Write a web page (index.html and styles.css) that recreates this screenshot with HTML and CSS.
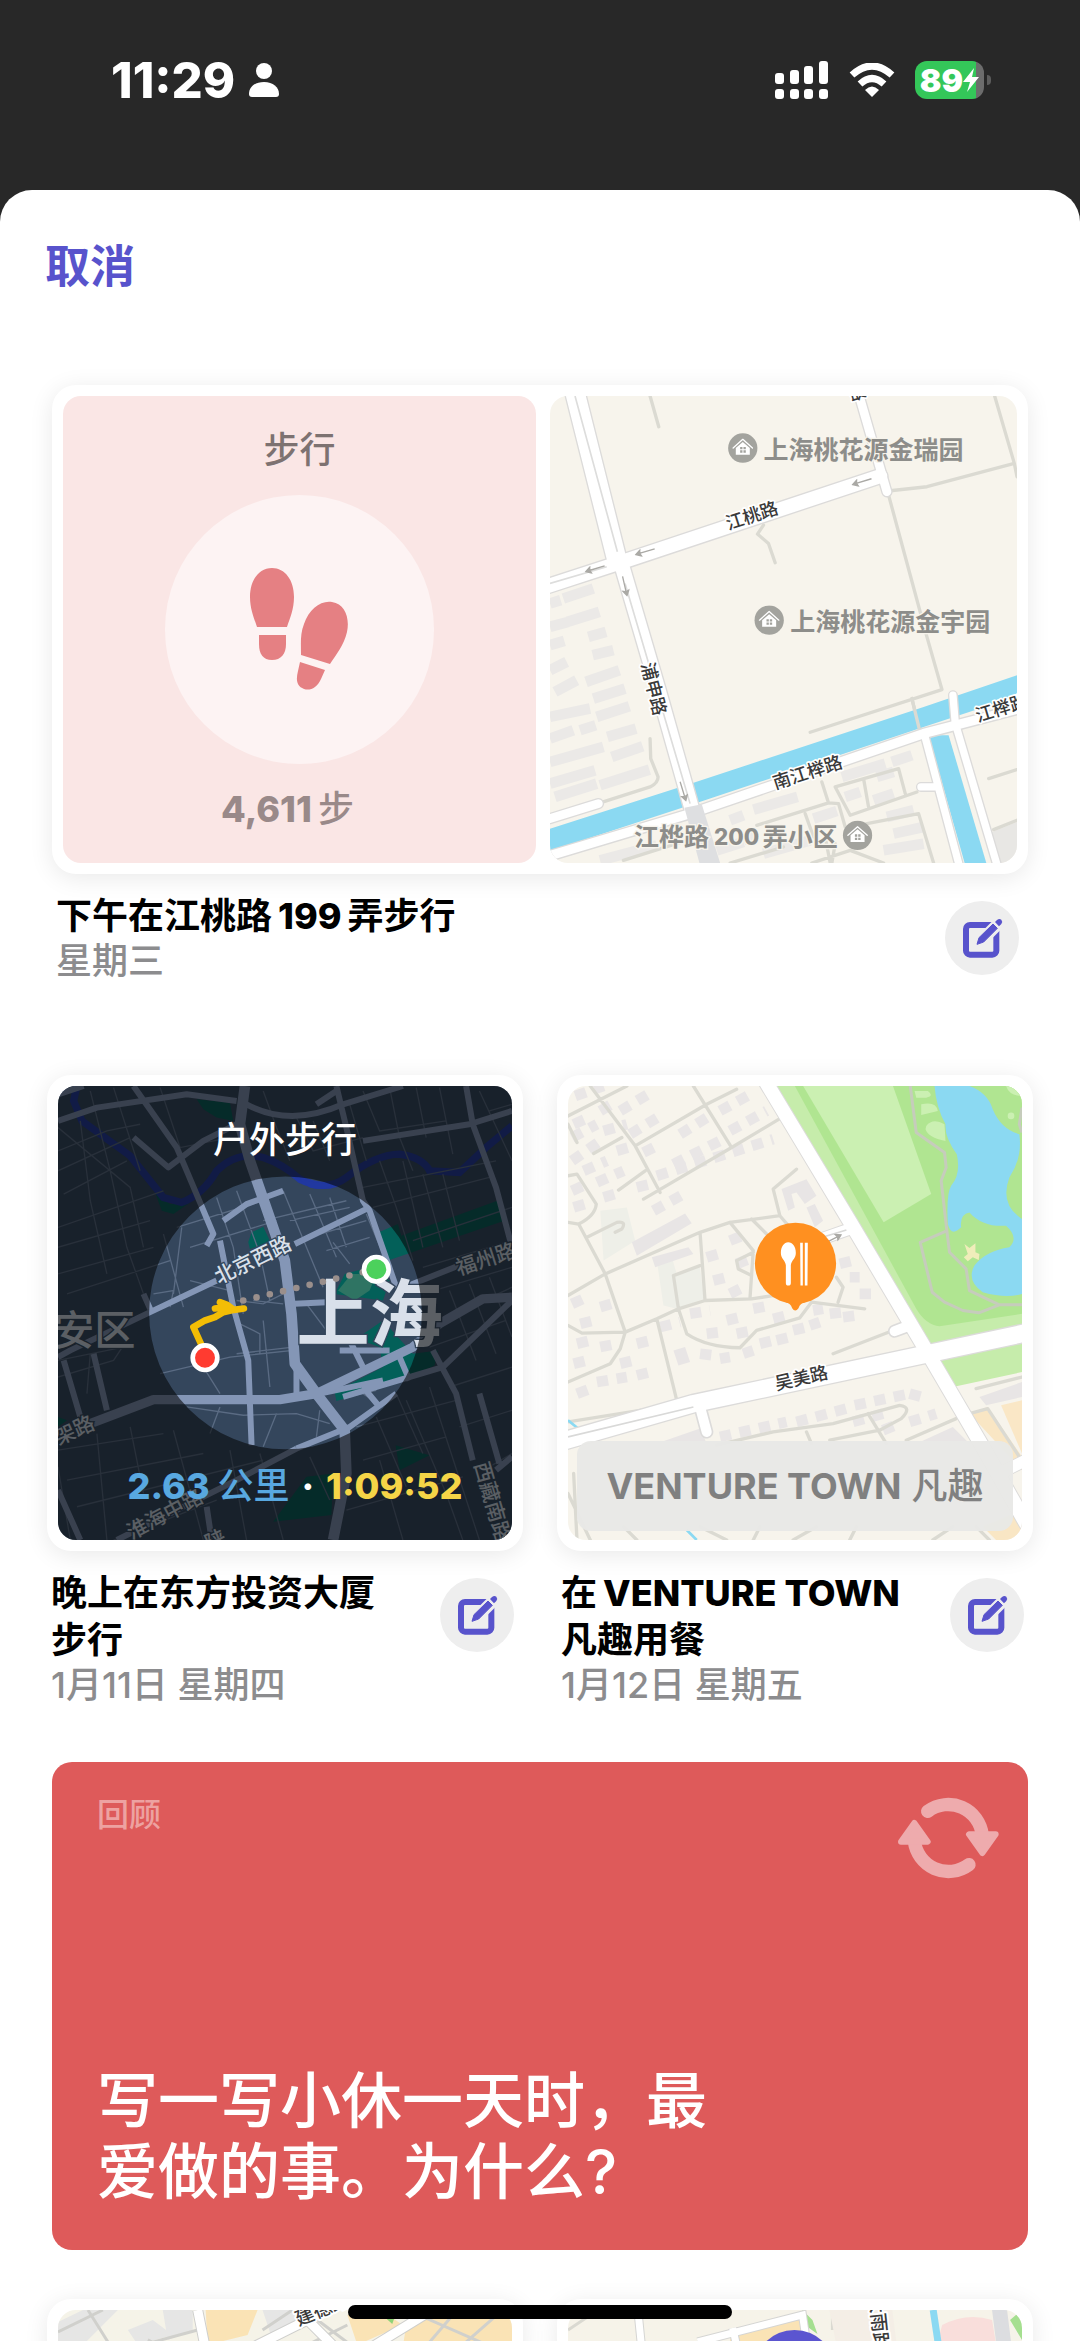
FILE: index.html
```html
<!DOCTYPE html>
<html lang="zh-CN">
<head>
    <meta charset="UTF-8">
    <meta name="viewport" content="width=device-width, initial-scale=1.0">
    <title>手记建议</title>
    <link rel="stylesheet" href="styles.css">
</head>
<body>
    <!-- Shared icons -->
    <svg class="icon-defs" aria-hidden="true">
        <symbol id="icon-edit" viewBox="128 108 126 126">
            <rect x="143" y="132" width="91" height="89" rx="12" fill="none" stroke="currentColor" stroke-width="18"/>
            <path d="M182 186L256 112" stroke="#eeeeee" stroke-width="36" fill="none"/>
            <path d="M176 190L182 170L224 129L237 142L196 183Z" fill="currentColor" stroke="currentColor" stroke-width="3" stroke-linejoin="round"/>
            <path d="M230 123L236 117Q243 111 249 116Q254 122 249 129L242 136Z" fill="currentColor"/>
        </symbol>
        <symbol id="icon-house" viewBox="0 0 90 90">
            <circle cx="45" cy="45" r="44" fill="#a3a39e"/>
            <path d="M16 45L45 19L74 45" fill="none" stroke="#fff" stroke-width="4" stroke-linecap="round" stroke-linejoin="round"/>
            <path d="M24 45L45 27L66 45V65H24Z" fill="#fff"/>
            <path d="M37 42h7v7h-7zM47 42h7v7h-7zM37 52h7v7h-7zM47 52h7v7h-7z" fill="#a3a39e"/>
        </symbol>
        <symbol id="icon-arrow" viewBox="0 0 64 24">
            <path d="M62 12H14M18 3L3 12L18 21L15 12Z" fill="#aaa9a5" stroke="#aaa9a5" stroke-width="4"/>
        </symbol>
    </svg>

    <header class="status-bar">
        <div class="status-left">
            <span class="time">11:29</span>
            <svg class="person" viewBox="0 0 32 34" aria-hidden="true">
                <circle cx="16" cy="8" r="8" fill="#fff"/>
                <path d="M1 31C1 24 7 19 16 19S31 24 31 31Q31 34 28 34H4Q1 34 1 31Z" fill="#fff"/>
            </svg>
        </div>
        <div class="status-right">
            <svg class="signal" viewBox="0 0 54 38" aria-hidden="true" fill="#fff">
                <rect x="0" y="12" width="9" height="11" rx="3"/>
                <rect x="15" y="9" width="9" height="14" rx="3"/>
                <rect x="29" y="5" width="9" height="18" rx="3"/>
                <rect x="44" y="0" width="9" height="23" rx="3"/>
                <rect x="0" y="28" width="9" height="10" rx="3"/>
                <rect x="15" y="28" width="9" height="10" rx="3"/>
                <rect x="29" y="28" width="9" height="10" rx="3"/>
                <rect x="44" y="28" width="9" height="10" rx="3"/>
            </svg>
            <svg class="wifi" viewBox="0 0 46 34" aria-hidden="true">
                <path d="M3 12Q23 -6 43 12M11 21Q23 10 35 21" fill="none" stroke="#fff" stroke-width="7"/>
                <path d="M23 34L16 27Q23 20 30 27Z" fill="#fff"/>
            </svg>
            <div class="battery">
                <span class="battery-level">89</span>
                <svg class="bolt" viewBox="0 0 16 24" aria-hidden="true">
                    <path d="M11 0L0 14H7L4 24L16 9H9Z" fill="#fff"/>
                </svg>
            </div>
        </div>
    </header>

    <main class="sheet">
        <button class="cancel" type="button">取消</button>

        <article class="moment moment-wide">
            <div class="card card-split">
                <div class="steps">
                    <p class="steps-title">步行</p>
                    <div class="steps-circle">
                        <svg viewBox="0 0 98 122" aria-hidden="true" fill="#e58083">
                            <path d="M22 0C35 0 44 12 44 29C44 41 40 50 37 59H7C4 50 0 41 0 29C0 12 9 0 22 0Z"/>
                            <path d="M9 67H36V76C36 86 31 92 22 92S9 86 9 76Z"/>
                            <path d="M82 34C95 36 100 50 97 64C94 77 86 87 80 96L51 87C51 76 50 66 54 56C59 41 71 32 82 34Z"/>
                            <path d="M50 94L75 102L71 111C67 120 60 123 54 121C46 118 46 111 48 103Z"/>
                        </svg>
                    </div>
                    <p class="steps-count"><span class="latin">4,611</span>步</p>
                </div>
                <div class="tile">
                    <svg class="map" viewBox="60 78 1400 1400" role="img" aria-label="江桃路地图">
                        <rect x="60" y="78" width="1400" height="1400" fill="#f7f4ec"/>
                        <!-- buildings -->
                        <path class="building" d="M100 685L190 655M112 755L208 725M175 800L228 785M188 855L250 840M168 935L268 900M190 985L285 955M200 1040L298 1008M232 1100L318 1075M245 1160L338 1128M150 1080L197 1065M210 1245L358 1198M60 700L92 690M60 770L115 755M60 825L103 812M60 900L110 875M75 965L140 930M60 1040L180 1015M60 1105L130 1080M60 1175L220 1130M60 1240L195 1200M75 1280L200 1240"/>
                        <path class="building" d="M670 1318L802 1280M935 1220L1065 1180M1085 1175L1145 1155M210 1470L380 1425M600 1350L640 1335M640 1410L680 1395M945 1280L990 1265M1040 1220L1090 1205M1030 1290L1090 1270M1070 1340L1150 1320M1090 1390L1180 1370M1060 1440L1180 1420M560 1440L640 1415M700 1450L840 1410M850 1345L920 1322"/>
                        <path d="M1385 1385L1460 1355V1478H1410Z" fill="#e8e7e4"/>
                        <!-- footpaths -->
                        <g class="path">
                            <path d="M360 78L386 170M1393 78L1452 280L1460 320M1080 362L1190 350L1452 280M700 465L682 492L715 520L735 578M1075 375L1125 560L1190 800L1235 958L840 1086M1145 985L1168 1080"/>
                            <path d="M360 1105L362 1165L384 1220Q384 1238 360 1250L210 1298M875 1235L895 1298L680 1365M915 1250L1105 1195L1125 1270M915 1250L960 1335L1160 1265M1000 1225L1015 1310M895 1298L925 1300L945 1370M960 1370L1165 1330L1210 1478M845 1478L960 1440L1060 1478M825 1330L850 1400M885 1400L900 1478M280 1470L470 1410M600 1478L760 1430M1375 1225L1460 1198M1390 1378L1460 1350M915 1420L905 1478"/>
                        </g>
                        <!-- canal -->
                        <path d="M60 1375L495 1236L1180 1010L1460 915V978L1180 1070L495 1300L60 1442Z" fill="#8bd9f2"/>
                        <path d="M1195 1095H1255L1368 1478H1303Z" fill="#8bd9f2"/>
                        <path class="path" d="M1145 985L1168 1080"/>
                        <!-- streets: casing first, white on top -->
                        <g class="street-edge">
                            <path stroke-width="66" d="M133 60L262 575"/>
                            <path stroke-width="52" d="M272 575L385 960L485 1315"/>
                            <path stroke-width="50" d="M40 652L262 580L1050 318"/>
                            <path stroke-width="34" d="M982 60L1070 365M60 1345L205 1300"/>
                            <path stroke-width="36" d="M40 1462L480 1330L1180 1090L1480 1012"/>
                            <path stroke-width="30" d="M1183 1095L1288 1490M1172 1250H1215M1268 975L1275 1060L1402 1490"/>
                        </g>
                        <g class="street">
                            <path stroke-width="58" d="M133 60L262 575"/>
                            <path stroke-width="44" d="M272 575L385 960L485 1315"/>
                            <path stroke-width="42" d="M40 652L262 580L1050 318"/>
                            <path stroke-width="26" d="M982 60L1070 365M60 1345L205 1300"/>
                            <path stroke-width="28" d="M40 1462L480 1330L1180 1090L1480 1012"/>
                            <path stroke-width="22" d="M1183 1095L1288 1490M1172 1250H1215M1268 975L1275 1060L1402 1490"/>
                        </g>
                        <path d="M135 78L262 545M285 640L480 1300M60 640L230 590" fill="none" stroke="#dddddc" stroke-width="5"/>
                        <path d="M463 1312L515 1302L570 1478H508Z" fill="#dedfe1"/>
                        <use href="#icon-arrow" width="66" height="24" transform="translate(960 333) rotate(-17)"/>
                        <use href="#icon-arrow" width="66" height="24" transform="translate(310 543) rotate(-17)"/>
                        <use href="#icon-arrow" width="66" height="24" transform="translate(160 594) rotate(-17)"/>
                        <use href="#icon-arrow" width="66" height="24" transform="translate(280 683) rotate(-103)"/>
                        <use href="#icon-arrow" width="66" height="24" transform="translate(457 1298) rotate(-107)"/>
                        <!-- labels -->
                        <g class="street-name">
                            <text transform="translate(594 480) rotate(-18)">江桃路</text>
                            <text transform="translate(333 882) rotate(76)">浦申路</text>
                            <text transform="translate(735 1258) rotate(-18)">南江榉路</text>
                            <text transform="translate(1342 1056) rotate(-17)">江榉路</text>
                            <text transform="translate(957 46) rotate(74)">路</text>
                        </g>
                        <g class="place-name">
                            <use href="#icon-house" x="593" y="189" width="90" height="90"/>
                            <text x="700" y="266">上海桃花源金瑞园</text>
                            <use href="#icon-house" x="672" y="705" width="90" height="90"/>
                            <text x="780" y="783">上海桃花源金宇园</text>
                            <text x="312" y="1426">江桦路</text>
                            <text class="latin" x="552" y="1424">200</text>
                            <text x="698" y="1426">弄小区</text>
                            <use href="#icon-house" x="937" y="1350" width="90" height="90"/>
                        </g>
                    </svg>
                </div>
            </div>
            <div class="caption">
                <div class="caption-text">
                    <h2>下午在江桃路<span class="latin">199</span>弄步行</h2>
                    <p>星期三</p>
                </div>
                <button class="edit" type="button" aria-label="编辑"><svg aria-hidden="true"><use href="#icon-edit"/></svg></button>
            </div>
        </article>

        <div class="pair">
            <article class="moment">
                <div class="card">
                    <div class="tile">
                        <svg class="map" viewBox="83 75 1365 1365" role="img" aria-label="上海步行路线">
                            <rect x="83" y="75" width="1365" height="1365" fill="#34465c"/>
                            <!-- parks -->
                            <path fill="#036059" d="M500 115L600 125L610 180L560 170L520 145ZM375 395L420 430L480 425L430 460L395 450ZM655 545L665 515L700 498L722 545L660 565ZM1048 515L1105 490L1115 525L1410 418L1425 480L1075 600ZM915 700L945 640L1000 625L1080 660L1060 720ZM980 835L1060 780L1150 880L1225 870L1215 915L1100 970L920 1022L915 995L1060 920L1050 860ZM1098 1155L1200 1185L1110 1230ZM730 1385L830 1250L910 1240L905 1365ZM83 1070L110 1080L83 1100Z"/>
                            <path fill="#2f7463" d="M925 690L965 640L1040 640L1020 690L975 720Z"/>
                            <!-- river -->
                            <path d="M140 75L130 120L155 180L300 285L400 410L455 425Q520 400 560 330Q620 270 700 290Q760 310 810 355Q890 395 950 350Q1040 280 1110 280Q1180 290 1200 330L1290 335L1370 260L1448 195" fill="none" stroke="#2138a0" stroke-width="22"/>
                            <path d="M805 352Q860 370 920 370Q880 392 840 380Z" fill="#2138a0"/>
                            <!-- lanes -->
                            <path class="lane" d="M83 270L230 210L330 190M83 330L300 230M100 400L290 300M83 500L400 390M83 560L360 480M83 640L370 560M110 700L420 600M180 90L240 330L290 560L340 700M250 80L330 330M390 80L450 260L600 230M83 200L300 380L340 560M150 180L180 420L230 640M700 90L740 200L780 300M800 170L850 270L1000 230M850 180L900 300M1000 90L1050 210L1250 180M1080 80L1110 230L1150 330M1160 80L1190 230M1230 80L1270 280M1350 90L1448 300M1380 150L1448 130M960 130L1010 300M1050 300L1100 440L1150 600M1120 300L1180 560M1180 340L1240 560M1240 340L1290 540M1000 380L1400 300M1030 440L1380 350M1150 540L1448 440M1180 620L1448 540"/>
                            <path class="lane" d="M455 500L430 700M400 520L460 740M440 500L700 420M480 560L740 480M560 410L610 560L640 760M620 390L690 580L720 720M760 390L830 560L880 680M700 480L950 420M780 480L960 440M840 400L920 590M900 410L950 560M870 520L1010 480M890 570L1020 530M910 545L960 610M700 780L720 980M630 790L690 820L690 880M480 660L600 690M760 700L700 730L620 720M620 880L790 860M390 940L600 890L790 870M520 920L570 1000M570 1040L540 1120M470 1040L640 1065L800 1060L900 1090M740 1060L700 1160M870 1050L860 1130M950 1010L1040 990M1000 1000L1060 1040M670 720L760 730M830 730L920 850M370 700L430 690L420 740M1010 460L1060 580"/>
                            <path class="lane" d="M83 900L280 860M83 950L250 900L290 840M180 880L170 1000M83 1170L400 1120M110 1260L520 1180M140 1340L700 1200M200 1120L230 1440M300 1100L340 1300M430 1110L520 1440M600 1170L650 1440M690 1180L760 1440M83 1220L120 1440M250 1440L560 1320M1180 700L1448 620M1190 800L1448 680M1200 860L1430 780M1260 690L1340 900M1320 670L1400 880M1380 650L1448 830M1100 1000L1180 1180M1040 1070L1130 1280M980 1100L1280 1020M1000 1200L1250 1130M950 1350L1300 1250M1130 1020L1250 1300L1300 1440M1200 980L1350 1440M1050 1200L1120 1440M1290 1100L1448 1050M1260 980L1448 920M840 1190L900 1320M1380 1220L1448 1180"/>
                            <!-- main roads -->
                            <g class="avenue">
                                <path stroke-width="18" d="M83 180L200 140L470 100L620 120M160 75L83 100M310 75L440 260L470 330L550 520L530 555M310 230L415 320L520 240L620 190M650 130Q780 200 940 130L1120 75M860 130L920 90M920 75L950 200L1000 420L1020 450L1100 680M1000 240L1320 190L1448 150M1310 75L1330 190L1400 380L1448 560M580 480L650 430L760 390M360 755L560 660M360 755L120 870L83 890M795 550L1020 440M795 730L890 725M570 540L610 740L655 900L665 1155M800 900L800 1000M1100 690L1300 610M940 1010L1240 920L1448 720M800 1165L960 1100L1100 1000M83 1290L150 1440M190 880L230 1050M100 900L150 1070M960 840L1000 920M870 1000L1060 960M800 1165L620 1260L260 1440M1000 980L1050 1040M1110 890L1140 960M1210 870L1280 1000L1330 1200M1350 1000L1410 1210M930 870L1080 870M1448 1190L1400 1230M530 1340L545 1440M340 700L360 745"/>
                                <path stroke-width="32" d="M645 75L630 190L660 300L740 530L765 600L785 760L795 910L860 1000L945 1110L950 1240L910 1440"/>
                                <path stroke-width="28" d="M180 1090L370 1018L750 1018L860 1000L1150 860L1230 790L1360 715L1448 710"/>
                            </g>
                            <!-- labels -->
                            <g class="night-label">
                                <text transform="translate(567 672) rotate(-26)">北京西路</text>
                                <text transform="translate(1288 645) rotate(-18)">福州路</text>
                                <text transform="translate(28 1180) rotate(-24)">高架路</text>
                                <text transform="translate(305 1440) rotate(-28)">淮海中路</text>
                                <text transform="translate(538 1472) rotate(-25)">陕</text>
                                <text transform="translate(1334 1212) rotate(74)">西藏南路</text>
                            </g>
                            <text class="night-district" x="-56" y="855">静安区</text>
                            <text class="night-city" x="800" y="840">上海</text>
                            <!-- dim everything outside the circle -->
                            <path d="M83 75H1448V1440H83ZM357 757a410 410 0 1 0 820 0a410 410 0 1 0 -820 0Z" fill="rgba(7, 8, 10, 0.6)" fill-rule="evenodd"/>
                            <!-- route -->
                            <path d="M640 720L1000 635" fill="none" stroke="#9a8f8c" stroke-width="20" stroke-linecap="round" stroke-dasharray="0 41"/>
                            <path d="M513 850L490 800L525 780L555 770L580 755L612 748L642 744M612 748L590 732L570 725M555 744L580 740" fill="none" stroke="#f3bd05" stroke-width="20" stroke-linecap="round" stroke-linejoin="round"/>
                            <circle cx="1040" cy="626" r="37" fill="#4cd15c" stroke="#fff" stroke-width="14"/>
                            <circle cx="525" cy="892" r="37" fill="#ff3b30" stroke="#fff" stroke-width="14"/>
                        </svg>
                        <div class="overlay overlay-walk">
                            <p class="walk-title">户外步行</p>
                            <p class="walk-stats"><span class="distance">2.63<span class="unit">公里</span></span> · <span class="duration">1:09:52</span></p>
                        </div>
                    </div>
                </div>
                <div class="caption">
                    <div class="caption-text">
                        <h2>晚上在东方投资大厦步行</h2>
                        <p>1月11日 星期四</p>
                    </div>
                    <button class="edit" type="button" aria-label="编辑"><svg aria-hidden="true"><use href="#icon-edit"/></svg></button>
                </div>
            </article>

            <article class="moment">
                <div class="card">
                    <div class="tile">
                        <svg class="map" viewBox="83 75 1365 1365" role="img" aria-label="吴美路地图">
                            <rect x="83" y="75" width="1365" height="1365" fill="#f7f4ec"/>
                            <!-- park -->
                            <path d="M700 75H1448V795L1165 855Z" fill="#c6ecab"/>
                            <path d="M765 75H1448V760L1200 797Q1160 795 1130 745Z" fill="#b0e591"/>
                            <path d="M790 75H1060L1175 400L1032 485Z" fill="#cbf0b2"/>
                            <path d="M1185 905L1448 845V935L1240 980Z" fill="#c6ecab"/>
                            <path d="M1125 90H1165Q1185 105 1160 110H1130ZM1145 130Q1190 120 1195 150L1145 162ZM1160 195Q1180 170 1215 190L1218 240Q1165 230 1158 205ZM1405 165a10 10 0 1 0 20 0a10 10 0 1 0 -20 0M1400 75H1448V105Q1410 105 1400 75Z" fill="#cbf0b2"/>
                            <path d="M1185 75H1290Q1345 95 1360 145Q1385 205 1440 220Q1450 290 1410 350Q1380 430 1448 475V700Q1400 715 1330 695Q1280 660 1305 615Q1340 570 1410 560Q1440 530 1400 495Q1330 500 1290 455Q1260 460 1265 500Q1235 530 1225 490Q1220 400 1235 375Q1265 340 1252 280Q1215 230 1218 190Q1190 140 1185 75Z" fill="#8bd9f2"/>
                            <path d="M1275 550L1290 562L1308 548V575L1320 580L1318 598L1300 590L1285 602L1273 590L1285 580Z" fill="#f0edba"/>
                            <path class="walkway" d="M1112 75L1130 215L1215 275L1220 320L1205 360L1222 510L1230 575L1280 625L1290 690L1380 733L1318 757L1270 750L1215 725L1178 695L1142 545L1218 512M1380 733H1448M1448 140L1440 190L1448 215"/>
                            <!-- pale lots -->
                            <path d="M350 600L395 590L410 640L480 620L492 715L410 745L370 735ZM180 450L260 440L285 540L190 600Z" fill="#eeefe8"/>
                            <!-- houses -->
                            <g class="houses">
                                <path d="M105 105L190 75M100 190L150 168M180 150L230 120M95 230L170 190M240 150L340 90M270 220L360 165M95 300L180 240M130 330L200 300M540 150L640 95M570 210L680 150M420 220L500 170M310 275L360 250M400 310L540 240M190 210L260 190M170 365L250 330M230 270L280 255M95 390L140 370M190 410L240 395M100 440L150 425M290 380L330 370"/>
                                <path d="M350 345L700 235M340 450L430 400M95 730L140 710M180 740L230 725M110 850L150 840M180 860L230 850M290 850L330 840M100 910L140 900M240 910L280 900M170 965L260 950M290 945L330 935M110 1000L150 985M360 800L420 785M120 790L160 780"/>
                                <path d="M500 590L550 575M570 540L620 520M520 660L560 650M590 610L640 590M570 700L610 680M450 760L510 750M560 780L600 770M640 745L690 735M500 820L540 815M590 820L640 810M480 880L520 885M540 895L570 890M610 880L640 870M660 850L700 840M700 775L740 765M710 840L750 830M760 810L800 800M810 795L840 785M900 610L940 600M930 650L960 650M870 760L910 755M910 770L950 765M960 700L1000 700M820 750L850 745"/>
                                <path d="M540 1130L740 1085M770 1085L920 1045M945 1035L1110 1000M1110 1000L1165 1015M940 1085L1030 1060M1110 1085L1190 1060M1030 1110L1080 1090"/>
                            </g>
                            <path d="M275 545L435 458L455 488L290 585ZM335 590L445 560L460 580L345 620ZM725 385L800 355L830 405L795 430L770 395L755 400L765 440L745 450ZM800 440L825 430L850 480L825 500ZM400 870L435 860L450 905L415 915ZM1320 1010L1448 965V1010L1340 1035ZM1110 1160L1240 1100L1290 1150ZM350 1150L480 1105L500 1150Z" fill="#e8e5e5"/>
                            <path d="M1290 1060L1345 1040L1448 1190V1440H1370L1330 1400L1448 1350V1230L1420 1200Z" fill="#f9e6c4"/>
                            <path d="M1385 1035L1448 1020V1180Z" fill="#fae7c6"/>
                            <!-- lanes -->
                            <g class="path">
                                <path d="M150 75L285 255L360 395M83 165L260 75M285 255L500 130L590 85M460 75L575 260L725 170M160 278L245 230M235 388L315 330M310 415L575 260M83 190L110 245M83 345L110 340L168 430Q165 465 115 490L83 485M115 490L195 640L255 815M195 640L480 515L570 485L720 465M83 705L195 640M140 530L230 485Q260 480 245 505L225 515M480 515L495 720M400 645L480 615M400 645L415 745L350 775L255 815L125 818L83 795M255 815L240 865L210 910L83 965M350 775L410 1020M415 745L495 720L635 715L700 705M720 465L700 385L770 325M570 485L640 570L630 715M635 475L680 520M720 465L750 500M590 600L595 625L635 645M415 745L440 820Q500 860 600 862L650 810L780 772L815 725M815 725L975 745M890 650L910 680L895 725M880 880L1060 810M640 575L590 600M83 1085L300 1050"/>
                                <path d="M530 1155L700 1115L880 1090L1080 1035Q1120 1040 1085 1075L1020 1110L870 1140M985 1060L1040 1150M1100 1140L1250 1075M800 1115L815 1150M1310 985L1448 950M1290 1060L1345 1045L1440 1190M83 1300L150 1440M100 1240L110 1440M250 1400L290 1440M760 1440L830 1400M930 1440L950 1400M1180 1440L1240 1400M1310 1400L1350 1440M660 1400L640 1440M480 1400L560 1440"/>
                            </g>
                            <path d="M83 1080L120 1110M440 1410L470 1440" stroke="#8bd9f2" stroke-width="8"/>
                            <!-- streets -->
                            <g class="street-edge">
                                <path stroke-width="48" d="M670 50L935 490L1160 870L1330 1160L1460 1390"/>
                                <path stroke-width="60" d="M60 1145L460 1030L1165 880L1470 815"/>
                                <path stroke-width="40" d="M480 1040L500 1115M1065 812L1110 795"/>
                                <path stroke-width="40" d="M830 540L930 505M1400 1230L1460 1200"/>
                            </g>
                            <g class="street">
                                <path stroke-width="42" d="M670 50L935 490L1160 870L1330 1160L1460 1390"/>
                                <path stroke-width="52" d="M60 1145L460 1030L1165 880L1470 815"/>
                                <path stroke-width="30" d="M480 1040L500 1115M1065 812L1110 795"/>
                                <path stroke-width="34" d="M830 540L930 505M1400 1230L1460 1200"/>
                            </g>
                            <path d="M83 1130L460 1040M830 535L920 508" fill="none" stroke="#d9d9d8" stroke-width="5"/>
                            <use href="#icon-arrow" width="64" height="24" transform="translate(912 532) rotate(153)"/>
                            <g class="street-name">
                                <text transform="translate(710 990) rotate(-13)">吴美路</text>
                            </g>
                            <!-- restaurant pin -->
                            <circle cx="767" cy="608" r="122" fill="#ff9020"/>
                            <path d="M735 724Q752 728 757 743Q766 757 776 743Q781 728 798 724Z" fill="#ff9020"/>
                            <path d="M745 545C758 545 768 558 768 577C768 594 754 600 753 614V667Q753 675 745 675Q738 675 738 667V614C737 600 723 594 723 577C723 558 733 545 745 545Z" fill="#fff"/>
                            <path d="M781 546H789V675H782ZM795 546H804L803 675H795Z" fill="#fff"/>
                        </svg>
                        <div class="overlay overlay-place">
                            <p class="place-badge"><span class="latin">VENTURE TOWN</span>凡趣</p>
                        </div>
                    </div>
                </div>
                <div class="caption">
                    <div class="caption-text">
                        <h2>在<span class="latin">VENTURE TOWN</span> 凡趣用餐</h2>
                        <p>1月12日 星期五</p>
                    </div>
                    <button class="edit" type="button" aria-label="编辑"><svg aria-hidden="true"><use href="#icon-edit"/></svg></button>
                </div>
            </article>
        </div>

        <section class="prompt">
            <div class="prompt-head">
                <h3>回顾</h3>
                <button class="refresh" type="button" aria-label="换一个">
                    <svg viewBox="113 106 303 252" aria-hidden="true">
                        <g id="turn">
                            <path d="M202 152A103 103 0 0 1 366 224" fill="none" stroke="#eeabad" stroke-width="40" stroke-linecap="round"/>
                            <path d="M326 221H406L366 277Z" fill="#eeabad" stroke="#eeabad" stroke-width="18" stroke-linejoin="round"/>
                        </g>
                        <use href="#turn" transform="rotate(180 264 232)"/>
                    </svg>
                </button>
            </div>
            <p class="prompt-text">写一写小休一天时，最爱做的事。为什么?</p>
        </section>

        <div class="pair">
            <article class="moment">
                <div class="card">
                    <div class="tile">
                        <svg class="map" viewBox="0 0 455 455" role="img" aria-label="建德路地图">
                            <rect width="455" height="455" fill="#f5f3e8"/>
                            <path d="M0 12L25 0H60L20 40H0ZM70 20L95 10L115 25L80 35ZM105 0H135V20L110 30ZM205 0H250L215 30Z" fill="#e6e6e5"/>
                            <path d="M148 0H200L190 25L150 35ZM290 5L325 0L345 15L300 35ZM350 10L400 0L440 20L410 40H345ZM405 0H455V40H430Z" fill="#fae3b5"/>
                            <path d="M325 5L340 0L335 14Z" fill="#8fd377"/>
                            <path class="lane-light" d="M0 22L45 0M30 0L55 40M85 35L140 20M90 30L110 40M205 20L235 0M250 35L290 15M260 10L300 40M350 0L430 35M370 35L400 0M400 40L440 5"/>
                            <path d="M140 0L148 40M190 40L270 0M310 40L375 0M250 10L280 40" fill="none" stroke="#cfcfcd" stroke-width="11"/>
                            <path d="M140 0L148 40M190 40L270 0M310 40L375 0M250 10L280 40" fill="none" stroke="#fff" stroke-width="9"/>
                            <g class="street-name street-name-small">
                                <text transform="translate(241 16) rotate(-22)">建德路</text>
                            </g>
                        </svg>
                    </div>
                </div>
            </article>
            <article class="moment">
                <div class="card">
                    <div class="tile">
                        <svg class="map" viewBox="0 0 455 455" role="img" aria-label="住处附近地图">
                            <rect width="455" height="455" fill="#f6f3e9"/>
                            <path d="M165 20L230 5L240 40H160Z" fill="#fae3b5"/>
                            <path d="M235 0L245 10L250 24L236 14ZM443 10L455 0V30Z" fill="#a5df90"/>
                            <path d="M375 15Q400 2 425 10L430 40H368Z" fill="#f9dedb"/>
                            <path d="M425 0H440L445 40H430Z" fill="#dcdde0"/>
                            <path d="M0 20L30 0M265 0V20" fill="none" stroke="#dad9d1" stroke-width="3"/>
                            <path d="M70 0L74 40M130 32L235 5L238 25M165 18L170 40" fill="none" stroke="#d5d5d3" stroke-width="9"/>
                            <path d="M70 0L74 40M130 32L235 5L238 25M165 18L170 40" fill="none" stroke="#fff" stroke-width="7"/>
                            <path d="M366 0L372 40" stroke="#8bd9f2" stroke-width="7"/>
                            <path d="M262 0H325L330 40H270Z" fill="#f4eee6"/>
                            <circle cx="227" cy="61" r="41" fill="#5b55d0"/>
                            <g class="street-name street-name-small">
                                <text transform="translate(302 -15) rotate(84)">大雨路</text>
                            </g>
                        </svg>
                    </div>
                </div>
            </article>
        </div>
    </main>

    <div class="home-indicator"></div>
</body>
</html>
```
FILE: styles.css
```css
/* General styles */
* {
    box-sizing: border-box;
}

body {
    display: flex;
    flex-direction: column;
    height: 100vh;
    margin: 0;
    overflow: hidden;
    background-color: #282828;
    color: #000;
    font-family: Inter, 'Noto Sans CJK SC', sans-serif;
    font-size: 36px;
    font-weight: 500;
}

h2, h3, p {
    margin: 0;
}

button {
    padding: 0;
    border: none;
    background: none;
    font-family: inherit;
    cursor: pointer;
}

.icon-defs {
    position: absolute;
    width: 0;
    height: 0;
}

.latin {
    font-weight: 800;
}

/* Status bar */
.status-bar {
    display: flex;
    flex: none;
    justify-content: space-between;
    align-items: center;
    height: 190px;
    padding: 0 88px 30px 111px;
    color: #fff;
}

.status-left, .status-right {
    display: flex;
    align-items: center;
}

.status-left {
    gap: 13px;
}

.status-right {
    gap: 20px;
}

.time {
    font-size: 49px;
    font-weight: 800;
}

.person {
    width: 32px;
    height: 34px;
}

.signal {
    width: 54px;
    height: 38px;
}

.wifi {
    width: 46px;
    height: 34px;
}

.battery {
    position: relative;
    display: flex;
    align-items: center;
    justify-content: center;
    width: 69px;
    height: 38px;
    margin-right: 8px;
    border-radius: 12px;
    background: linear-gradient(90deg, #34c759 89%, #6c6c6c 89%);
}

.battery::after {
    content: "";
    position: absolute;
    top: 14px;
    right: -7px;
    width: 4px;
    height: 10px;
    border-radius: 0 4px 4px 0;
    background-color: #5c5c5c;
}

.battery-level {
    font-size: 32px;
    font-weight: 900;
}

.bolt {
    width: 16px;
    height: 24px;
}

/* Sheet */
.sheet {
    flex: 1;
    min-height: 0;
    padding: 47px 47px 0;
    overflow: hidden;
    border-radius: 32px 32px 0 0;
    background-color: #fff;
}

.cancel {
    display: block;
    margin-left: -2px;
    color: #5853cc;
    font-size: 45px;
    font-weight: 600;
    line-height: 60px;
}

/* Moments */
.moment-wide {
    margin: 88px 5px 93px;
}

.pair {
    display: grid;
    grid-template-columns: 1fr 1fr;
    gap: 34px;
}

.card {
    padding: 11px;
    border-radius: 24px;
    background-color: #fff;
    box-shadow: 0 4px 24px rgba(0, 0, 0, 0.09);
}

.card-split {
    display: grid;
    grid-template-columns: 473fr 467fr;
    gap: 14px;
}

.tile {
    position: relative;
    aspect-ratio: 1;
    overflow: hidden;
    border-radius: 18px;
}

.map {
    display: block;
    width: 100%;
    height: 100%;
}

.caption {
    display: flex;
    justify-content: space-between;
    align-items: flex-start;
    gap: 32px;
    padding: 19px 9px 0 4px;
}

.caption h2 {
    font-size: 36px;
    font-weight: 600;
    line-height: 47px;
}

.caption h2 .latin {
    margin: 0 6px;
}

.caption p {
    color: #8c8c8e;
    font-size: 36px;
    line-height: 42px;
}

.edit {
    display: flex;
    flex: none;
    align-items: center;
    justify-content: center;
    width: 74px;
    height: 74px;
    margin-top: 8px;
    border-radius: 50%;
    background-color: #eee;
    color: #5853cc;
}

.edit svg {
    width: 42px;
    height: 42px;
}

/* Steps tile */
.steps {
    display: flex;
    flex-direction: column;
    align-items: center;
    justify-content: space-between;
    padding: 30px 0;
    border-radius: 18px;
    background-color: #fae6e5;
}

.steps-title {
    color: #7d7271;
    line-height: 48px;
}

.steps-circle {
    display: flex;
    align-items: center;
    justify-content: center;
    width: 57%;
    aspect-ratio: 1;
    border-radius: 50%;
    background-color: #fdf3f3;
}

.steps-circle svg {
    width: 98px;
    height: 122px;
}

.steps-count {
    padding-right: 24px;
    color: #998989;
    line-height: 48px;
}

.steps-count .latin {
    margin-right: 6px;
}

/* Text over the maps */
.overlay {
    position: absolute;
    inset: 0;
    display: flex;
    flex-direction: column;
}

.overlay-walk {
    justify-content: space-between;
    padding: 30px 0;
    color: #fff;
    text-align: center;
}

.walk-title {
    line-height: 48px;
}

.walk-stats {
    padding-left: 20px;
    font-weight: 800;
    line-height: 48px;
}

.distance {
    color: #58a8e0;
}

.unit {
    margin: 0 4px 0 8px;
    font-weight: 500;
}

.duration {
    margin-left: 4px;
    color: #f5d547;
}

.overlay-place {
    justify-content: flex-end;
    padding: 9px;
}

.place-badge {
    border-radius: 14px;
    background-color: rgba(232, 232, 230, 0.97);
    color: #808080;
    line-height: 90px;
    text-align: center;
}

.place-badge .latin {
    margin-right: 10px;
    font-weight: 700;
}

/* Day maps, sizes in map units */
.building {
    fill: none;
    stroke: #ebe9e7;
    stroke-width: 32;
}

.houses {
    fill: none;
    stroke: #e9e6e6;
    stroke-width: 32;
    stroke-dasharray: 34 26;
}

.path {
    fill: none;
    stroke: #dbdad2;
    stroke-width: 10;
    stroke-linecap: round;
    stroke-linejoin: round;
}

.walkway {
    fill: none;
    stroke: #c6ccbc;
    stroke-width: 9;
    stroke-linejoin: round;
}

.street-edge, .street {
    fill: none;
    stroke-linecap: round;
    stroke-linejoin: round;
}

.street-edge {
    stroke: #dcdbda;
}

.street {
    stroke: #fff;
}

.street-name {
    fill: #3a3a3a;
    stroke: #fff;
    stroke-width: 10;
    stroke-linejoin: round;
    paint-order: stroke;
    font-size: 54px;
}

.street-name-small {
    stroke-width: 4;
    font-size: 19px;
}

.place-name {
    fill: #8d8d8a;
    stroke: #f7f4ec;
    stroke-width: 8;
    paint-order: stroke;
    font-size: 75px;
    font-weight: 600;
}

.place-name .latin {
    font-size: 67px;
}

.place-name use {
    stroke: none;
}

.lane-light {
    fill: none;
    stroke: #d0d0cc;
    stroke-width: 3;
}

/* Night map */
.lane {
    fill: none;
    stroke: #5a6b83;
    stroke-width: 4;
}

.avenue {
    fill: none;
    stroke: #8496b6;
    stroke-linejoin: round;
}

.night-label, .night-district, .night-city {
    fill: #d9e0ea;
    stroke: #34465c;
    stroke-width: 8;
    paint-order: stroke;
}

.night-label {
    font-size: 62px;
}

.night-district {
    font-size: 124px;
}

.night-city {
    font-size: 220px;
    font-weight: 600;
}

/* Reflection prompt */
.prompt {
    display: flex;
    flex-direction: column;
    justify-content: space-between;
    aspect-ratio: 2;
    margin: 56px 5px 49px;
    padding: 30px 29px 42px 45px;
    border-radius: 20px;
    background-color: #de5a5a;
    color: #fff;
}

.prompt-head {
    display: flex;
    justify-content: space-between;
    align-items: flex-start;
}

.prompt h3 {
    color: #eda2a1;
    font-size: 32px;
    font-weight: 500;
    line-height: 46px;
}

.refresh {
    margin-top: 4px;
}

.refresh svg {
    display: block;
    width: 101px;
    height: 84px;
}

.prompt-text {
    max-width: 620px;
    font-size: 61px;
    line-height: 71px;
}

.home-indicator {
    position: fixed;
    bottom: 22px;
    left: 50%;
    width: 384px;
    height: 14px;
    margin-left: -192px;
    border-radius: 7px;
    background-color: #000;
}
```
